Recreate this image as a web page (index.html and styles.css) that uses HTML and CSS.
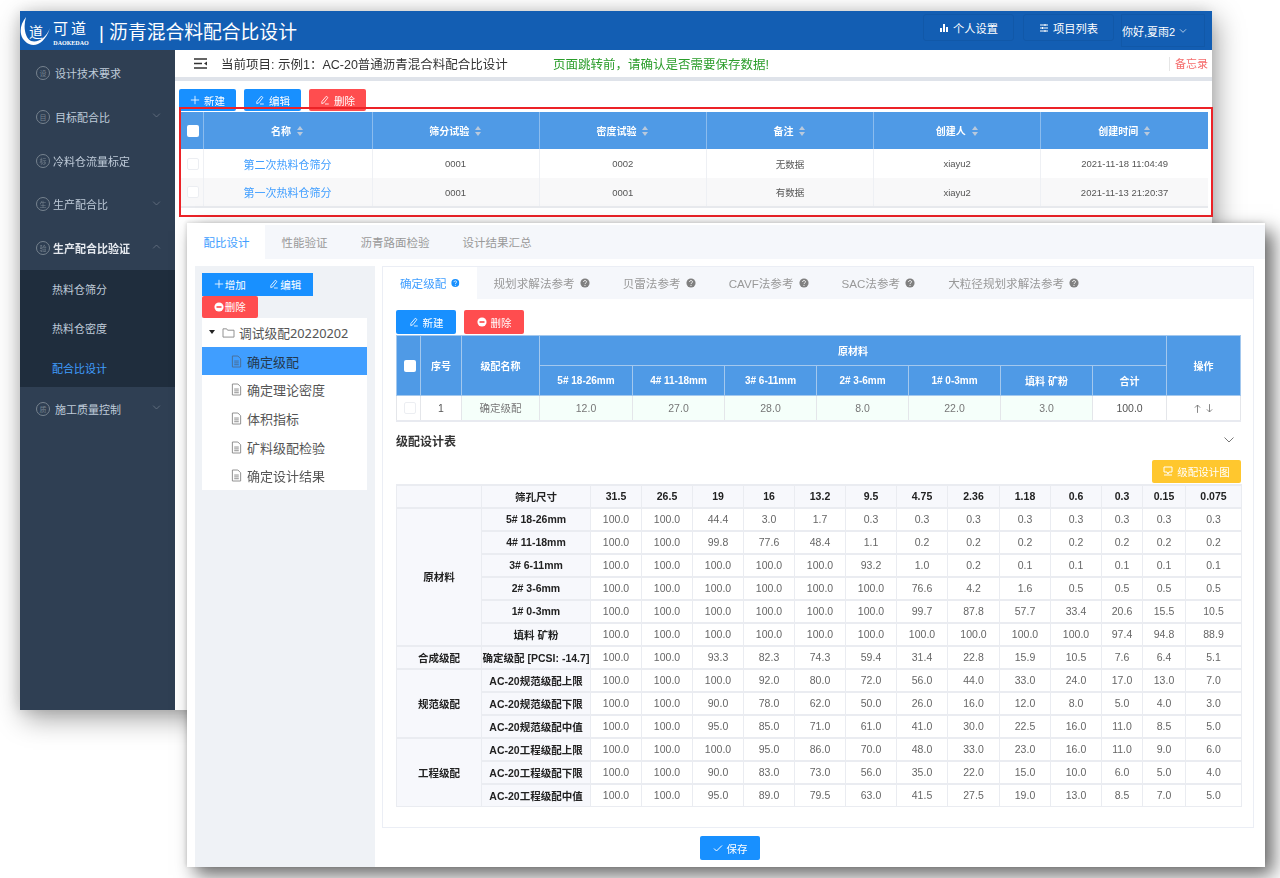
FILE: index.html
```html
<!DOCTYPE html>
<html lang="en">

<head>
  <meta charset="UTF-8">
  <title>沥青混合料配合比设计</title>
  <link rel="stylesheet" href="styles.css">
</head>

<body>
  <svg class="sprite" width="0" height="0">
    <symbol id="i-plus" viewBox="0 0 12 12"><path d="M6 1v10M1 6h10" fill="none" stroke="currentColor" stroke-width="1"/></symbol>
    <symbol id="i-pen" viewBox="0 0 12 12"><path d="M7.500 1.500l2 1.500-5 6.500-2.400.8.200-2.500zM6 10.800h4.500" fill="none" stroke="currentColor" stroke-width="1"/></symbol>
    <symbol id="i-minus" viewBox="0 0 12 12"><circle cx="6" cy="6" r="5.500" fill="currentColor"/><path d="M3 5h6v2H3z" fill="#ff4d4f"/></symbol>
    <symbol id="i-help" viewBox="0 0 12 12"><circle cx="6" cy="6" r="5.500" fill="currentColor"/><path d="M4.200 4.800c0-2.300 3.600-2.300 3.600-.2 0 1.300-1.800 1.300-1.800 2.700" fill="none" stroke="#fff" stroke-width="1.100"/><circle cx="6" cy="9" r=".7" fill="#fff"/></symbol>
    <symbol id="i-down" viewBox="0 0 12 12"><path d="M1.500 3.500L6 8l4.500-4.500" fill="none" stroke="currentColor" stroke-width="1"/></symbol>
    <symbol id="i-file" viewBox="0 0 12 14"><path d="M1.500 1h6l3 3v9h-9zM3.500 6.500h5M3.500 8.500h5M3.500 10.500h5" fill="none" stroke="currentColor" stroke-width="1"/></symbol>
    <symbol id="i-folder" viewBox="0 0 14 12"><path d="M1 2h4l1 1.500h7V11H1z" fill="none" stroke="currentColor" stroke-width="1"/></symbol>
  </svg>

  <!-- 上の画面 -->
  <div class="window win-top">
    <header class="topbar">
      <div class="logo">
        <svg class="logo-mark" viewBox="0 0 32 36">
          <path d="M6 4C-2 14-1 26 9 31c7 3 16-1 21-16-4 10-12 15-19 13C5 25 3 14 6 4z" fill="#fff"/>
          <text x="9" y="24" class="logo-dao">道</text>
        </svg>
        <div class="logo-text">
          <div class="logo-cn">可道</div>
          <div class="logo-en">DAOKEDAO</div>
        </div>
      </div>
      <div class="app-title">| 沥青混合料配合比设计</div>
      <div class="top-actions">
        <a class="top-btn">
          <svg class="ico10" viewBox="0 0 10 10"><path d="M1 5h2v4H1zM4 1h2v8H4zM7 4h2v5H7z" fill="currentColor"/></svg>个人设置
        </a>
        <a class="top-btn">
          <svg class="ico10" viewBox="0 0 10 10"><path d="M1 2h8M1 5h8M1 8h8M6 1v2M3.500 4v2M6 7v2" fill="none" stroke="currentColor"/></svg>项目列表
        </a>
        <a class="top-user">你好,夏雨2 <svg class="ico8"><use href="#i-down"/></svg></a>
      </div>
    </header>

    <div class="top-body">
      <nav class="sidebar">
        <div class="menu-item"><i class="badge">设</i>设计技术要求</div>
        <div class="menu-item"><i class="badge">目</i>目标配合比<svg class="menu-arrow"><use href="#i-down"/></svg></div>
        <div class="menu-item tight"><i class="badge">标</i>冷料仓流量标定</div>
        <div class="menu-item tight"><i class="badge">生</i>生产配合比<svg class="menu-arrow"><use href="#i-down"/></svg></div>
        <div class="menu-item tight open"><i class="badge">验</i>生产配合比验证<svg class="menu-arrow up"><use href="#i-down"/></svg></div>
        <div class="submenu">
          <div class="sub-item">热料仓筛分</div>
          <div class="sub-item">热料仓密度</div>
          <div class="sub-item active">配合比设计</div>
        </div>
        <div class="menu-item"><i class="badge">质</i>施工质量控制<svg class="menu-arrow"><use href="#i-down"/></svg></div>
      </nav>

      <main class="main">
        <div class="project-bar">
          <svg class="hamburger" viewBox="0 0 13 11"><path d="M0 1h13M0 5.500h8M0 10h13" stroke="#333" stroke-width="1.300"/><path d="M13 3.500v4l-3-2z" fill="#333"/></svg>
          <span class="project-name">当前项目: 示例1&#xFF1A;AC-20普通沥青混合料配合比设计</span>
          <span class="project-warn">页面跳转前&#xFF0C;请确认是否需要保存数据!</span>
          <span class="memo">备忘录</span>
        </div>
        <div class="toolbar">
          <a class="btn blue wide"><svg class="ico10"><use href="#i-plus"/></svg>新建</a>
          <a class="btn blue wide"><svg class="ico10"><use href="#i-pen"/></svg>编辑</a>
          <a class="btn red wide"><svg class="ico10"><use href="#i-pen"/></svg>删除</a>
        </div>
        <table class="list-table">
          <thead>
            <tr>
              <th class="check-cell"><span class="check head"></span></th>
              <th>名称 <i class="sort"></i></th>
              <th>筛分试验 <i class="sort"></i></th>
              <th>密度试验 <i class="sort"></i></th>
              <th>备注 <i class="sort"></i></th>
              <th>创建人 <i class="sort"></i></th>
              <th>创建时间 <i class="sort"></i></th>
            </tr>
          </thead>
          <tbody>
            <tr><td class="check-cell"><span class="check"></span></td><td class="link">第二次热料仓筛分</td><td>0001</td><td>0002</td><td>无数据</td><td>xiayu2</td><td>2021-11-18 11:04:49</td></tr>
            <tr class="stripe"><td class="check-cell"><span class="check"></span></td><td class="link">第一次热料仓筛分</td><td>0001</td><td>0001</td><td>有数据</td><td>xiayu2</td><td>2021-11-13 21:20:37</td></tr>
          </tbody>
        </table>
      </main>
    </div>
    <div class="red-frame"></div>
  </div>

  <!-- 下の画面 -->
  <div class="window win-bottom">
    <div class="page-tabs">
      <div class="page-tab active">配比设计</div>
      <div class="page-tab">性能验证</div>
      <div class="page-tab">沥青路面检验</div>
      <div class="page-tab">设计结果汇总</div>
    </div>

    <div class="page-body">
      <aside class="tree-pane">
        <div class="tree-btns">
          <a class="tree-btn blue"><svg class="ico10"><use href="#i-plus"/></svg>增加</a>
          <a class="tree-btn blue"><svg class="ico10"><use href="#i-pen"/></svg>编辑</a>
          <a class="tree-btn red"><svg class="ico10"><use href="#i-minus"/></svg>删除</a>
        </div>
        <div class="tree">
          <div class="tree-root"><i class="caret"></i><svg class="tree-folder"><use href="#i-folder"/></svg>调试级配20220202</div>
          <div class="tree-node selected"><svg class="tree-file"><use href="#i-file"/></svg>确定级配</div>
          <div class="tree-node"><svg class="tree-file"><use href="#i-file"/></svg>确定理论密度</div>
          <div class="tree-node"><svg class="tree-file"><use href="#i-file"/></svg>体积指标</div>
          <div class="tree-node"><svg class="tree-file"><use href="#i-file"/></svg>矿料级配检验</div>
          <div class="tree-node"><svg class="tree-file"><use href="#i-file"/></svg>确定设计结果</div>
        </div>
      </aside>

      <section class="work">
        <div class="panel">
          <div class="inner-tabs">
            <div class="inner-tab active">确定级配<svg class="help"><use href="#i-help"/></svg></div>
            <div class="inner-tab">规划求解法参考<svg class="help"><use href="#i-help"/></svg></div>
            <div class="inner-tab">贝雷法参考<svg class="help"><use href="#i-help"/></svg></div>
            <div class="inner-tab">CAVF法参考<svg class="help"><use href="#i-help"/></svg></div>
            <div class="inner-tab">SAC法参考<svg class="help"><use href="#i-help"/></svg></div>
            <div class="inner-tab">大粒径规划求解法参考<svg class="help"><use href="#i-help"/></svg></div>
          </div>

          <div class="panel-body">
            <div class="panel-btns">
              <a class="btn blue"><svg class="ico10"><use href="#i-pen"/></svg>新建</a>
              <a class="btn red"><svg class="ico10"><use href="#i-minus"/></svg>删除</a>
            </div>

            <table class="mix-table">
              <colgroup>
                <col class="w24"><col class="w41"><col class="w78"><col class="w93"><col class="w92"><col class="w92"><col class="w92"><col class="w92"><col class="w92"><col class="w74"><col class="w74">
              </colgroup>
              <thead>
                <tr class="h30">
                  <th rowspan="2" class="check-cell"><span class="check head"></span></th>
                  <th rowspan="2">序号</th>
                  <th rowspan="2">级配名称</th>
                  <th colspan="7">原材料</th>
                  <th rowspan="2">操作</th>
                </tr>
                <tr class="h30">
                  <th>5# 18-26mm</th><th>4# 11-18mm</th><th>3# 6-11mm</th><th>2# 3-6mm</th><th>1# 0-3mm</th><th>填料 矿粉</th><th>合计</th>
                </tr>
              </thead>
              <tbody>
                <tr>
                  <td class="check-cell"><span class="check"></span></td><td class="dark">1</td><td class="mint">确定级配</td><td class="mint">12.0</td><td class="mint">27.0</td><td class="mint">28.0</td><td class="mint">8.0</td><td class="mint">22.0</td><td class="mint">3.0</td><td class="dark">100.0</td>
                  <td class="dark">
                    <svg class="arrow" viewBox="0 0 8 10"><path d="M4 10V1M1 4l3-3 3 3" fill="none" stroke="currentColor"/></svg>
                    <svg class="arrow" viewBox="0 0 8 10"><path d="M4 0v9M1 6l3 3 3-3" fill="none" stroke="currentColor"/></svg>
                  </td>
                </tr>
              </tbody>
            </table>

            <div class="section-head">
              <span>级配设计表</span>
              <svg class="section-arrow"><use href="#i-down"/></svg>
            </div>
            <div class="chart-row">
              <a class="btn yellow">
                <svg class="ico10" viewBox="0 0 10 10"><path d="M1 1h8v5H6L5 8 4 6H1zM1 9h8" fill="none" stroke="currentColor"/></svg>级配设计图
              </a>
            </div>

            <table class="grade-table">
              <colgroup>
                <col class="w85"><col class="w109"><col class="w51"><col class="w51"><col class="w51"><col class="w51"><col class="w51"><col class="w51"><col class="w51"><col class="w52"><col class="w51"><col class="w51"><col class="w41"><col class="w43"><col class="w56">
              </colgroup>
              <tbody>
                <tr class="grade-head"><td class="label"></td><td class="label">筛孔尺寸</td><td>31.5</td><td>26.5</td><td>19</td><td>16</td><td>13.2</td><td>9.5</td><td>4.75</td><td>2.36</td><td>1.18</td><td>0.6</td><td>0.3</td><td>0.15</td><td>0.075</td></tr>
                <tr><td class="label" rowspan="6">原材料</td><td class="label">5# 18-26mm</td><td>100.0</td><td>100.0</td><td>44.4</td><td>3.0</td><td>1.7</td><td>0.3</td><td>0.3</td><td>0.3</td><td>0.3</td><td>0.3</td><td>0.3</td><td>0.3</td><td>0.3</td></tr>
                <tr><td class="label">4# 11-18mm</td><td>100.0</td><td>100.0</td><td>99.8</td><td>77.6</td><td>48.4</td><td>1.1</td><td>0.2</td><td>0.2</td><td>0.2</td><td>0.2</td><td>0.2</td><td>0.2</td><td>0.2</td></tr>
                <tr><td class="label">3# 6-11mm</td><td>100.0</td><td>100.0</td><td>100.0</td><td>100.0</td><td>100.0</td><td>93.2</td><td>1.0</td><td>0.2</td><td>0.1</td><td>0.1</td><td>0.1</td><td>0.1</td><td>0.1</td></tr>
                <tr><td class="label">2# 3-6mm</td><td>100.0</td><td>100.0</td><td>100.0</td><td>100.0</td><td>100.0</td><td>100.0</td><td>76.6</td><td>4.2</td><td>1.6</td><td>0.5</td><td>0.5</td><td>0.5</td><td>0.5</td></tr>
                <tr><td class="label">1# 0-3mm</td><td>100.0</td><td>100.0</td><td>100.0</td><td>100.0</td><td>100.0</td><td>100.0</td><td>99.7</td><td>87.8</td><td>57.7</td><td>33.4</td><td>20.6</td><td>15.5</td><td>10.5</td></tr>
                <tr><td class="label">填料 矿粉</td><td>100.0</td><td>100.0</td><td>100.0</td><td>100.0</td><td>100.0</td><td>100.0</td><td>100.0</td><td>100.0</td><td>100.0</td><td>100.0</td><td>97.4</td><td>94.8</td><td>88.9</td></tr>
                <tr><td class="label">合成级配</td><td class="label nowrap">确定级配 [PCSI: -14.7]</td><td>100.0</td><td>100.0</td><td>93.3</td><td>82.3</td><td>74.3</td><td>59.4</td><td>31.4</td><td>22.8</td><td>15.9</td><td>10.5</td><td>7.6</td><td>6.4</td><td>5.1</td></tr>
                <tr><td class="label" rowspan="3">规范级配</td><td class="label">AC-20规范级配上限</td><td>100.0</td><td>100.0</td><td>100.0</td><td>92.0</td><td>80.0</td><td>72.0</td><td>56.0</td><td>44.0</td><td>33.0</td><td>24.0</td><td>17.0</td><td>13.0</td><td>7.0</td></tr>
                <tr><td class="label">AC-20规范级配下限</td><td>100.0</td><td>100.0</td><td>90.0</td><td>78.0</td><td>62.0</td><td>50.0</td><td>26.0</td><td>16.0</td><td>12.0</td><td>8.0</td><td>5.0</td><td>4.0</td><td>3.0</td></tr>
                <tr><td class="label">AC-20规范级配中值</td><td>100.0</td><td>100.0</td><td>95.0</td><td>85.0</td><td>71.0</td><td>61.0</td><td>41.0</td><td>30.0</td><td>22.5</td><td>16.0</td><td>11.0</td><td>8.5</td><td>5.0</td></tr>
                <tr><td class="label" rowspan="3">工程级配</td><td class="label">AC-20工程级配上限</td><td>100.0</td><td>100.0</td><td>100.0</td><td>95.0</td><td>86.0</td><td>70.0</td><td>48.0</td><td>33.0</td><td>23.0</td><td>16.0</td><td>11.0</td><td>9.0</td><td>6.0</td></tr>
                <tr><td class="label">AC-20工程级配下限</td><td>100.0</td><td>100.0</td><td>90.0</td><td>83.0</td><td>73.0</td><td>56.0</td><td>35.0</td><td>22.0</td><td>15.0</td><td>10.0</td><td>6.0</td><td>5.0</td><td>4.0</td></tr>
                <tr><td class="label">AC-20工程级配中值</td><td>100.0</td><td>100.0</td><td>95.0</td><td>89.0</td><td>79.5</td><td>63.0</td><td>41.5</td><td>27.5</td><td>19.0</td><td>13.0</td><td>8.5</td><td>7.0</td><td>5.0</td></tr>
              </tbody>
            </table>
          </div>
        </div>

        <div class="save-row">
          <a class="btn blue">
            <svg class="ico10" viewBox="0 0 10 10"><path d="M1 5.500l2.500 2.500L9 2.500" fill="none" stroke="currentColor"/></svg>保存
          </a>
        </div>
      </section>
    </div>
  </div>
</body>

</html>
```

FILE: styles.css
```css
* {
  margin: 0;
  padding: 0;
  box-sizing: border-box;
}

body {
  position: relative;
  width: 1280px;
  height: 878px;
  overflow: hidden;
  background: #fff;
  font-family: "Liberation Sans", "Noto Sans CJK SC", sans-serif;
  font-size: 11px;
  color: #333;
}

.sprite {
  position: absolute;
}

/* 2枚の画面はキャンバス上に置く。元画像が拡大でぼけているので少しぼかす */
.window {
  position: absolute;
  background: #fff;
  filter: blur(.35px);
}

.win-top {
  left: 20px;
  top: 11px;
  width: 1192px;
  height: 699px;
  box-shadow: 4px 8px 26px rgba(0, 0, 0, .38), -2px 0 14px rgba(0, 0, 0, .1);
}

.win-bottom {
  left: 187px;
  top: 223px;
  width: 1078px;
  height: 644px;
  box-shadow: 8px 8px 18px rgba(0, 0, 0, .6), -1px -1px 4px rgba(0, 0, 0, .12);
}

.ico10 {
  width: 10px;
  height: 10px;
  margin-right: 4px;
  flex: none;
}

.ico8 {
  width: 8px;
  height: 8px;
}

/* header */
.topbar {
  display: flex;
  align-items: center;
  height: 39px;
  background: #135eb3;
  color: #fff;
}

.logo {
  display: flex;
  align-items: center;
  width: 79px;
  height: 39px;
}

.logo-mark {
  width: 32px;
  height: 36px;
  flex: none;
}

.logo-dao {
  font-size: 14px;
  fill: #fff;
}

.logo-text {
  margin-left: 1px;
  padding-top: 4px;
  text-align: center;
}

.logo-cn {
  font-size: 15px;
  line-height: 19px;
  letter-spacing: 3px;
}

.logo-en {
  font-family: "Liberation Serif", serif;
  font-size: 6px;
  font-weight: bold;
  line-height: 8px;
  margin-top: 1px;
}

.app-title {
  font-size: 18.800px;
  white-space: nowrap;
}

.top-actions {
  display: flex;
  margin-left: auto;
  margin-right: 7px;
}

.top-btn {
  display: flex;
  align-items: center;
  justify-content: center;
  width: 91px;
  height: 27px;
  margin-right: 9px;
  border: 1px solid #1158a8;
  border-radius: 3px;
  font-size: 11.250px;
}

.top-user {
  display: flex;
  align-items: center;
  gap: 4px;
  width: 84px;
  height: 33px;
  margin-left: -2px;
  border: 1px solid #1158a8;
  font-size: 11px;
  white-space: nowrap;
}

.top-body {
  display: flex;
  height: 660px;
}

/* sidebar */
.sidebar {
  width: 155px;
  flex: none;
  padding-top: 1px;
  background: #2f3f53;
  color: #bfcbd9;
}

.menu-item {
  display: flex;
  align-items: center;
  position: relative;
  height: 44px;
  padding-left: 16px;
}

.menu-item.tight {
  height: 43.500px;
}

.menu-item.open {
  color: #e4e8ee;
  font-weight: bold;
}

.badge {
  display: flex;
  align-items: center;
  justify-content: center;
  width: 14px;
  height: 14px;
  margin-right: 5px;
  border: 1px solid #77838f;
  border-radius: 50%;
  color: #77838f;
  font-size: 7px;
  font-style: normal;
  font-weight: normal;
}

.tight .badge {
  margin-right: 3px;
}

.menu-arrow {
  position: absolute;
  right: 14px;
  top: 16px;
  width: 9px;
  height: 9px;
  color: #6d7a8a;
}

.menu-arrow.up {
  transform: rotate(180deg);
}

.submenu {
  background: #1f2d3d;
}

.sub-item {
  display: flex;
  align-items: center;
  height: 39.300px;
  padding-left: 32px;
}

.sub-item.active {
  color: #409eff;
}

/* main */
.main {
  flex: 1;
  min-width: 0;
  padding-bottom: 6px;
}

.project-bar {
  display: flex;
  align-items: center;
  height: 31px;
  padding-left: 19px;
  border-bottom: 4px solid #dfe3ea;
  font-size: 12.500px;
  white-space: nowrap;
}

.hamburger {
  width: 13px;
  height: 11px;
  margin-right: 14px;
}

.project-name {
  width: 332px;
}

.project-warn {
  color: #2a9d2a;
}

.memo {
  margin-left: auto;
  width: 43px;
  padding-left: 5px;
  border-left: 1px solid #e6e6e6;
  color: #f56c6c;
  font-size: 11px;
  line-height: 14px;
}

.toolbar {
  display: flex;
  gap: 8px;
  padding: 8px 0 1px 4px;
}

.btn {
  display: inline-flex;
  align-items: center;
  justify-content: center;
  width: 60px;
  height: 24px;
  border-radius: 2px;
  color: #fff;
  font-size: 10.500px;
}

.btn.wide {
  width: 57px;
  height: 22px;
}

.blue {
  background: #1890ff;
}

.red {
  background: #ff4d4f;
}

.yellow {
  width: 89px;
  height: 23px;
  background: #ffc72e;
}

/* list table */
table {
  border-collapse: collapse;
  table-layout: fixed;
  text-align: center;
}

.list-table {
  width: 1028px;
  margin-left: 5px;
  border-bottom: 2px solid #e8eaee;
}

.list-table th {
  height: 37px;
  background: #4f9ae6;
  border-left: 1px solid #8bbcee;
  color: #fff;
  font-size: 10px;
}

.list-table th:first-child {
  border-left: 0;
}

.list-table th.check-cell {
  width: 23px;
}

.list-table th:nth-child(2) {
  width: 169px;
}

.check-cell {
  padding-left: 3px;
}

.list-table td {
  height: 29px;
  border-left: 1px solid #eef0f4;
  color: #555;
  font-size: 9.500px;
}

.list-table td:first-child {
  border-left: 0;
}

.list-table td.link {
  color: #409eff;
  font-size: 11px;
}

.stripe td {
  background: #f8f8f9;
}

.check {
  display: inline-block;
  width: 12px;
  height: 12px;
  border: 1px solid #eceef2;
  border-radius: 2px;
  background: #fff;
  vertical-align: middle;
}

.check.head {
  border: 0;
}

.sort {
  display: inline-block;
  position: relative;
  width: 7px;
  height: 10px;
  margin-left: 3px;
  vertical-align: -1px;
}

.sort::before,
.sort::after {
  content: '';
  position: absolute;
  left: 0;
  border-left: 3.500px solid transparent;
  border-right: 3.500px solid transparent;
}

.sort::before {
  top: 0;
  border-bottom: 4px solid #b9c9dc;
}

.sort::after {
  bottom: 0;
  border-top: 4px solid #b9c9dc;
}

.red-frame {
  position: absolute;
  left: 159px;
  top: 96px;
  width: 1034px;
  height: 110px;
  border: 2px solid #ec2227;
}

/* page tabs */
.page-tabs {
  display: flex;
  height: 34px;
  margin-top: 2px;
  background: #f5f7fb;
  color: #999;
  font-size: 11.500px;
  white-space: nowrap;
}

.page-tab {
  display: flex;
  align-items: center;
  padding: 0 16.500px;
}

.page-tab.active {
  width: 78px;
  background: #fff;
  color: #409eff;
}

.page-body {
  display: flex;
  height: 608px;
  padding: 7px 11px 0 8px;
}

/* tree */
.tree-pane {
  width: 180px;
  flex: none;
  padding: 7px 8px 0 7px;
  background: #eff2f6;
}

.tree-btns {
  display: flex;
  flex-wrap: wrap;
}

.tree-btn {
  display: flex;
  align-items: center;
  justify-content: center;
  width: 55.500px;
  height: 22.500px;
  color: #fff;
  font-size: 10.500px;
}

.tree-btn .ico10 {
  margin-right: 1px;
}

.tree-btn.red {
  border-radius: 2px;
}

.tree {
  background: #fff;
  font-family: "Noto Sans", "Noto Sans CJK SC", sans-serif;
  font-size: 13px;
  color: #555;
}

.tree-root,
.tree-node {
  display: flex;
  align-items: center;
  height: 28.700px;
  white-space: nowrap;
}

.tree-root {
  padding-left: 7px;
  font-size: 12.750px;
}

.tree-node {
  padding-left: 29px;
}

.tree-node.selected {
  background: #409eff;
  color: #24384d;
}

.caret {
  width: 0;
  height: 0;
  margin-right: 7px;
  border-left: 3px solid transparent;
  border-right: 3px solid transparent;
  border-top: 4px solid #222;
}

.tree-folder {
  width: 13px;
  height: 11px;
  margin-right: 4px;
  color: #888;
}

.tree-file {
  width: 11px;
  height: 13px;
  margin-right: 5px;
  color: #888;
}

.selected .tree-file {
  color: #4a6c92;
}

/* work panel */
.work {
  flex: 1;
  min-width: 0;
  margin-left: 7px;
}

.panel {
  height: 562px;
  border: 1px solid #ebeef5;
}

.inner-tabs {
  display: flex;
  height: 32px;
  background: #f5f7fb;
  color: #999;
  font-size: 11.600px;
  white-space: nowrap;
}

.inner-tab {
  display: flex;
  align-items: center;
  padding: 0 16.500px;
}

.inner-tab.active {
  width: 94px;
  padding: 0 17px;
  background: #fff;
  color: #409eff;
}

.help {
  width: 10px;
  height: 10px;
  margin-left: 5px;
  color: #808080;
}

.inner-tab.active .help {
  color: #1890ff;
}

.panel-body {
  padding: 11px 12px 0 13px;
}

.panel-btns {
  display: flex;
  gap: 8px;
  height: 25px;
}

.mix-table,
.grade-table {
  width: 845px;
}

.w24 { width: 24px; }
.w41 { width: 41px; }
.w43 { width: 43px; }
.w51 { width: 51px; }
.w52 { width: 52px; }
.w56 { width: 56px; }
.w74 { width: 74px; }
.w78 { width: 78px; }
.w85 { width: 85px; }
.w92 { width: 92px; }
.w93 { width: 93px; }
.w109 { width: 109px; }

.mix-table {
  border: 1px solid #e8eaf0;
  border-bottom-width: 2px;
}

.mix-table th {
  background: #4f9ae6;
  border: 1px solid #a3c8ee;
  color: #fff;
  font-size: 10px;
}

.h30 {
  height: 30px;
}

.mix-table td {
  height: 25px;
  border: 1px solid #e4e6ea;
  color: #777;
  font-size: 10.500px;
}

.mix-table td.dark {
  color: #555;
}

.mix-table td.mint {
  background: #f5fffa;
}

.arrow {
  width: 7px;
  height: 9px;
  margin: 0 1px;
  color: #777;
  vertical-align: -1px;
}

.section-head {
  display: flex;
  align-items: center;
  justify-content: space-between;
  height: 37px;
  color: #333;
  font-size: 12px;
  font-weight: bold;
}

.section-arrow {
  width: 12px;
  height: 12px;
  margin-right: 6px;
  color: #777;
}

.chart-row {
  display: flex;
  justify-content: flex-end;
  height: 25px;
  padding-top: 1px;
}

.grade-table td {
  height: 23px;
  border: 1px solid #eaecf1;
  border-top-width: 2px;
  color: #666;
  font-size: 10.500px;
}

.grade-table td.label {
  background: #f7f8fc;
  color: #222;
  font-size: 10.500px;
  font-weight: bold;
}

.grade-head td {
  background: #f7f8fc;
  color: #222;
  font-weight: bold;
}

.nowrap {
  white-space: nowrap;
}

.save-row {
  padding: 8px 0 0 318px;
}
```
